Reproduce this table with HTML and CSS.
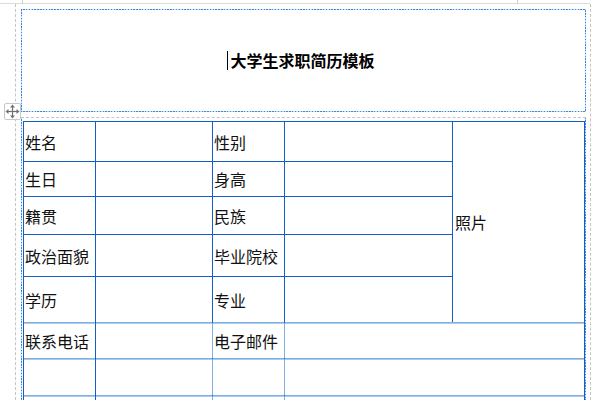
FILE: index.html
```html
<!DOCTYPE html>
<html lang="zh-CN">
<head>
<meta charset="utf-8">
<title>大学生求职简历模板</title>
<link rel="stylesheet" href="styles.css">
</head>
<body>
<div class="page">
  <div class="topline"></div>
  <div class="frame">
    <div class="title-box">
      <span class="caret"></span><span class="title">大学生求职简历模板</span>
    </div>
    <div class="divider"></div>
    <div class="table-wrap">
      <div class="grid">
        <div class="cell">姓名</div>
        <div class="cell"></div>
        <div class="cell">性别</div>
        <div class="cell"></div>
        <div class="cell photo">照片</div>

        <div class="cell">生日</div>
        <div class="cell"></div>
        <div class="cell">身高</div>
        <div class="cell"></div>

        <div class="cell">籍贯</div>
        <div class="cell"></div>
        <div class="cell">民族</div>
        <div class="cell"></div>

        <div class="cell">政治面貌</div>
        <div class="cell"></div>
        <div class="cell">毕业院校</div>
        <div class="cell"></div>

        <div class="cell">学历</div>
        <div class="cell"></div>
        <div class="cell">专业</div>
        <div class="cell"></div>

        <div class="cell low">联系电话</div>
        <div class="cell low"></div>
        <div class="cell low lv">电子邮件</div>
        <div class="cell low lv wide"></div>

        <div class="cell low"></div>
        <div class="cell low"></div>
        <div class="cell low lv"></div>
        <div class="cell low lv wide"></div>

        <div class="cell low"></div>
        <div class="cell low"></div>
        <div class="cell low lv"></div>
        <div class="cell low lv wide"></div>
      </div>
    </div>
  </div>
  <div class="move-handle">
    <svg width="15" height="15" viewBox="0 0 15 15">
      <g fill="none" stroke="#707070" stroke-width="1.2">
        <line x1="7.5" y1="2" x2="7.5" y2="13"/>
        <line x1="2" y1="7.5" x2="13" y2="7.5"/>
      </g>
      <g fill="#707070">
        <polygon points="7.5,0.5 5,3.5 10,3.5"/>
        <polygon points="7.5,14.5 5,11.5 10,11.5"/>
        <polygon points="0.5,7.5 3.5,5 3.5,10"/>
        <polygon points="14.5,7.5 11.5,5 11.5,10"/>
      </g>
    </svg>
  </div>
</div>
</body>
</html>
```

FILE: styles.css
```css
html, body {
  margin: 0;
  padding: 0;
  background: #ffffff;
}

body {
  width: 600px;
  height: 400px;
  overflow: hidden;
  font-family: "Noto Sans CJK SC", "Noto Sans", sans-serif;
  color: #111111;
}

.page {
  position: relative;
  width: 600px;
  height: 400px;
  overflow: hidden;
}

.topline {
  height: 4px;
  width: 590px;
  border-bottom: 1px solid #dcdcdc;
  box-sizing: border-box;
  position: relative;
}

.topline::before,
.topline::after {
  content: "";
  position: absolute;
  top: 0;
  width: 1px;
  height: 4px;
  background: #d0d0d0;
}

.topline::before { left: 22px; }
.topline::after { left: 517px; }

.frame {
  margin-left: 15px;
  width: 576px;
  box-sizing: border-box;
  border-left: 1px dashed #c4c4c4;
  border-right: 1px dashed #c4c4c4;
  padding: 5px 4px 0 5px;
  height: 396px;
}

.title-box {
  height: 103px;
  box-sizing: border-box;
  border: 1px solid #3b87dd;
  border-image: repeating-linear-gradient(45deg, #3b87dd 0 1px, #c2daf4 1px 2px) 1;
  display: flex;
  align-items: center;
  justify-content: center;
  padding-bottom: 1px;
}

.caret {
  display: inline-block;
  width: 1px;
  height: 19px;
  background: #000000;
  margin-left: -5px;
  margin-right: 2px;
}

.title {
  font-size: 16px;
  font-weight: bold;
  line-height: 20px;
  color: #000000;
}

.divider {
  margin-top: 5px;
  border-top: 1px dashed #c4c4c4;
}

.table-wrap {
  border-left: 1px solid #3b87dd;
  border-right: 1px solid #3b87dd;
  border-image: repeating-linear-gradient(45deg, #3b87dd 0 1px, #c2daf4 1px 2px) 1;
  padding: 3px 0 0 1px;
  height: 300px;
}

.grid {
  width: 562px;
  box-sizing: border-box;
  border: 1px solid #135fc6;
  background: #135fc6;
  display: grid;
  grid-template-columns: 71px 116px 71px 167px 131px;
  grid-template-rows: 39px 34px 37px 41px 45px 35px 36px 36px;
  gap: 1px;
}

.cell {
  background: #ffffff;
  display: flex;
  align-items: center;
  padding-left: 1px;
  font-size: 16px;
  line-height: 18px;
  white-space: nowrap;
}

.photo {
  grid-column: 5;
  grid-row: 1 / span 5;
  padding-left: 2px;
}

.wide {
  grid-column: 4 / span 2;
}

.low {
  box-shadow: 0 -1px 0 #7fb1e4, inset 0 1px 0 #a9caee;
}

.lv {
  box-shadow: 0 -1px 0 #7fb1e4, -1px 0 0 #7fb1e4, inset 0 1px 0 #a9caee;
}

.move-handle {
  position: absolute;
  left: 4px;
  top: 103px;
  width: 17px;
  height: 17px;
  box-sizing: border-box;
  border: 1px solid #c8c8c8;
  border-radius: 2px;
  background: #ffffff;
  display: flex;
  align-items: center;
  justify-content: center;
}
```
